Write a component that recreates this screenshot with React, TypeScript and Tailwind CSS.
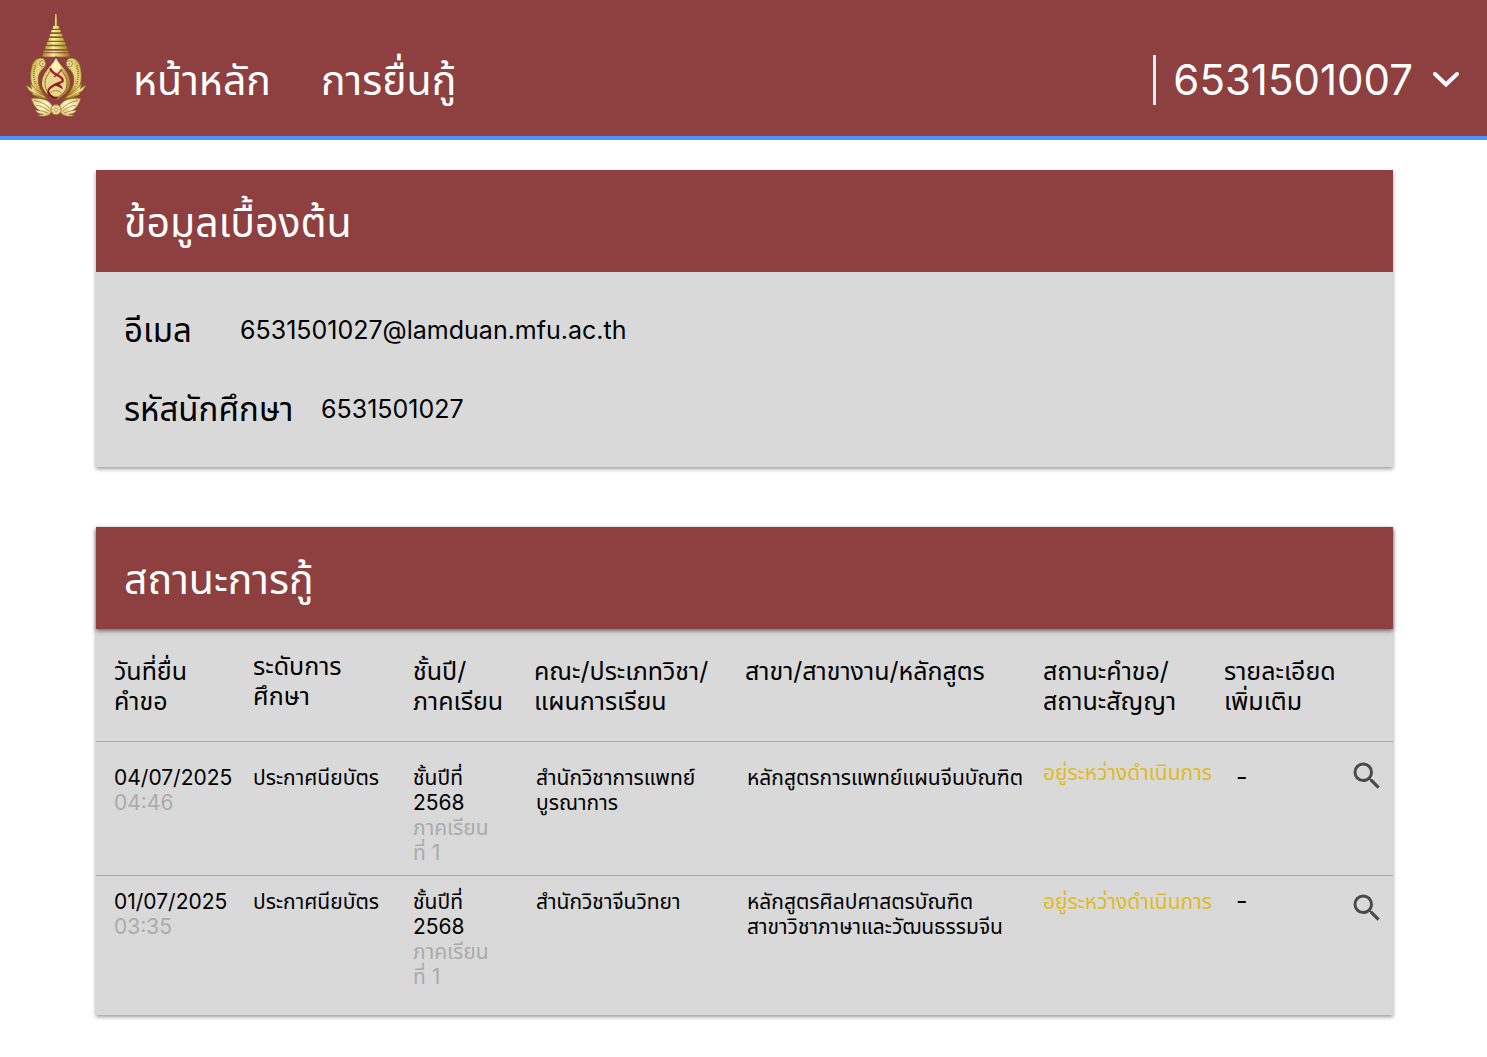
import { ReactNode } from "react";
import { MdSearch } from "react-icons/md";

const columns = [
  { width: "w-[139px]", pad: "pt-[27px]", lines: ["วันที่ยื่น", "คำขอ"] },
  { width: "w-[160px]", pad: "pt-[22px]", lines: ["ระดับการ", "ศึกษา"] },
  { width: "w-[121px]", pad: "pt-[27px]", lines: ["ชั้นปี/", "ภาคเรียน"] },
  { width: "w-[211px]", pad: "pt-[27px]", lines: ["คณะ/ประเภทวิชา/", "แผนการเรียน"] },
  { width: "w-[298px]", pad: "pt-[27px]", lines: ["สาขา/สาขางาน/หลักสูตร"] },
  { width: "w-[181px]", pad: "pt-[27px]", lines: ["สถานะคำขอ/", "สถานะสัญญา"] },
  { width: "w-[129px]", pad: "pt-[27px]", lines: ["รายละเอียด", "เพิ่มเติม"] },
];

const requests = [
  {
    date: "04/07/2025",
    time: "04:46",
    faculty: ["สำนักวิชาการแพทย์", "บูรณาการ"],
    program: ["หลักสูตรการแพทย์แผนจีนบัณฑิต"],
    row: "h-[134px] border-b border-[#a9a9a9]",
    cell: "pt-[23px]",
    status: "pt-[18px]",
    icon: "pt-4",
  },
  {
    date: "01/07/2025",
    time: "03:35",
    faculty: ["สำนักวิชาจีนวิทยา"],
    program: ["หลักสูตรศิลปศาสตรบัณฑิต", "สาขาวิชาภาษาและวัฒนธรรมจีน"],
    row: "h-[140px]",
    cell: "pt-[13px]",
    status: "pt-[13px]",
    icon: "pt-[14px]",
  },
];

function Lines({ items }: { items: string[] }) {
  return (
    <>
      {items.map((item) => (
        <span key={item} className="block">
          {item}
        </span>
      ))}
    </>
  );
}

function Emblem() {
  const side = (
    <>
      <path d="M84 164C70 158 54 168 49 188C44 210 44 232 54 252C64 270 82 280 100 286C82 268 70 250 69 230C68 210 76 200 88 190C94 180 92 168 84 164Z" fill="url(#gold)" stroke="#7d5f1c" strokeWidth="2" />
      <path d="M60 184C54 204 54 226 61 242" fill="none" stroke="#8d7432" strokeWidth="5" strokeDasharray="3 3" />
      <path d="M31 243C39 248 45 248 49 256C48 249 45 243 45 236C52 250 62 256 72 264C82 272 92 278 98 286C82 284 60 278 50 270C54 268 54 266 48 264C40 260 36 252 31 243Z" fill="url(#gold)" stroke="#7d5f1c" strokeWidth="1.5" />
      <path d="M42 252C54 264 70 270 88 280" fill="none" stroke="#fff2b4" strokeWidth="2" />
      <circle cx="82" cy="179" r="9" fill="#f2e4a4" stroke="#8d6d24" strokeWidth="2.5" />
      <circle cx="82" cy="179" r="3" fill="#b3923d" />
      <path d="M48 284C68 280 100 284 111 306C112 318 108 330 98 334C86 338 76 338 67 333C74 333 80 332 84 330C74 331 64 326 60 318C66 320 70 320 74 319C62 314 54 302 48 284Z" fill="url(#wing)" stroke="#8d6d24" strokeWidth="1.5" />
      <path d="M56 290C76 292 94 302 106 316M62 304C78 305 90 312 102 322M70 320C82 320 90 324 98 328" fill="none" stroke="#a18235" strokeWidth="2.5" />
    </>
  );
  return (
    <svg viewBox="29 30 186 312" className="h-[104px] w-[62px]" role="img" aria-label="ตรามหาวิทยาลัย">
      <defs>
        <linearGradient id="gold" x1="0" x2="1" y1="0" y2="1">
          <stop offset="0" stopColor="#b8942f" />
          <stop offset=".35" stopColor="#eddb86" />
          <stop offset=".65" stopColor="#bd9b38" />
          <stop offset="1" stopColor="#94701f" />
        </linearGradient>
        <linearGradient id="wing" x1="0" x2="1" y1="0" y2="1">
          <stop offset="0" stopColor="#dcc675" />
          <stop offset=".5" stopColor="#fff7cb" />
          <stop offset="1" stopColor="#cfb25a" />
        </linearGradient>
        <linearGradient id="spire">
          <stop offset="0" stopColor="#a88428" />
          <stop offset=".4" stopColor="#fbefa5" />
          <stop offset=".65" stopColor="#d8bd58" />
          <stop offset="1" stopColor="#937019" />
        </linearGradient>
      </defs>
      <path d="M120 64H124L132 80L142 102L152 122L158 144H86L91 122L101 102L112 80Z" fill="#83611c" />
      <g fill="url(#spire)">
        <path d="M120 30H124L126 66H118Z" />
        <path d="M114 66H130L132 74H112Z M109 78H135L137 85H107Z M105 90H139L142 97H102Z M101 102H144L146 110H99Z M96 114H149L151 122H94Z M91 127H154L156 135H89Z M85 140H159L161 145H83Z M82 148H163V158H82Z" />
      </g>
      {side}
      <g transform="matrix(-1 0 0 1 244 0)">{side}</g>
      <path d="M122 158C132 182 166 202 166 236C166 264 144 278 122 290C100 278 78 264 78 236C78 202 112 182 122 158Z" fill="url(#gold)" stroke="#8e4040" strokeWidth="4" />
      <path d="M122 176C130 194 155 212 155 238C155 262 140 272 122 283C104 272 89 262 89 238C89 212 114 194 122 176Z" fill="#e8d78e" stroke="#9c7029" strokeWidth="3" />
      <path d="M122 162C126 176 136 184 140 194L122 204L104 194C108 184 118 176 122 162Z" fill="#fff3b8" />
      <path d="M139 196C134 208 126 212 116 219" fill="none" stroke="#a62a35" strokeWidth="4" />
      <path d="M105 193C108 208 124 211 134 218C144 225 146 232 134 236C120 241 106 246 99 258" fill="none" stroke="#a01d29" strokeWidth="7" />
      <path d="M125 238C136 242 142 248 142 256C134 250 126 246 116 244" fill="#8c1c27" />
      <path d="M99 254C90 268 100 278 122 286L129 278C119 280 110 276 104 269" fill="#761621" />
      <path d="M104 268C112 258 130 256 138 268" fill="none" stroke="#ad8437" strokeWidth="3" />
      <circle cx="122" cy="317" r="15" fill="#f3e6ad" stroke="#a38236" strokeWidth="3" />
      <path d="M122 303V331M108 317H136M112 307L132 327M132 307L112 327" stroke="#b5964a" strokeWidth="2" />
      <circle cx="122" cy="317" r="4" fill="#fff9d8" stroke="#a38236" strokeWidth="1.5" />
    </svg>
  );
}

function PanelTitle({ children }: { children: ReactNode }) {
  return (
    <h2 className="flex h-[102px] items-center bg-[#8e4040] px-7 pt-px text-[41px] leading-[50px] text-white">
      {children}
    </h2>
  );
}

export default function App() {
  return (
    <div className="min-h-screen bg-white font-['Inter','Noto_Sans_Thai','Noto_Sans',sans-serif] text-black">
      <header className="flex h-[140px] items-center justify-between border-b-4 border-[#4d94f7] bg-[#8e4040] pr-[27px] pl-[25px] text-white">
        <div className="flex items-center">
          <a href="#home" className="mb-1">
            <Emblem />
          </a>
          <nav className="ml-[46px] flex gap-[50px] pt-6 text-[41px] leading-[50px]">
            <a href="#home">หน้าหลัก</a>
            <a href="#loans">การยื่นกู้</a>
          </nav>
        </div>
        <button type="button" className="mt-6 flex items-center text-[42px] leading-[50px]">
          <span className="mr-[17px] h-[50px] w-[3px] bg-white/90" />
          6531501007
          <svg viewBox="0 0 28 18" className="ml-[19px] w-7" fill="none" stroke="currentColor" strokeWidth="4" strokeLinecap="round">
            <path d="M3 3L14 13.5L25 3" />
          </svg>
        </button>
      </header>

      <main className="mx-auto flex flex-col gap-[60px] pt-[30px] pr-[94px] pb-10 pl-24">
        <section className="bg-[#d9d9d9] shadow-[0_2px_4px_rgba(0,0,0,0.4)]">
          <PanelTitle>ข้อมูลเบื้องต้น</PanelTitle>
          <dl className="flex flex-col gap-[39px] px-7 pt-[38px] pb-[38px]">
            <div className="flex h-10 items-center">
              <dt className="w-[116px] text-[33px] leading-10">อีเมล</dt>
              <dd className="text-[25px] leading-10">6531501027@lamduan.mfu.ac.th</dd>
            </div>
            <div className="flex h-10 items-center">
              <dt className="w-[197px] text-[33px] leading-10">รหัสนักศึกษา</dt>
              <dd className="text-[25px] leading-10">6531501027</dd>
            </div>
          </dl>
        </section>

        <section className="bg-[#d9d9d9] shadow-[0_2px_4px_rgba(0,0,0,0.4)]">
          <div className="relative shadow-[0_2px_4px_rgba(0,0,0,0.5)]">
            <PanelTitle>สถานะการกู้</PanelTitle>
          </div>
          <table className="w-full table-fixed border-collapse text-left">
            <thead>
              <tr className="h-[112px] border-b border-[#a9a9a9] align-top text-[25px] leading-[30px]">
                {columns.map((column) => (
                  <th key={column.lines[0]} scope="col" className={`${column.width} ${column.pad} pl-[18px] font-normal whitespace-nowrap`}>
                    <Lines items={column.lines} />
                  </th>
                ))}
                <td />
              </tr>
            </thead>
            <tbody>
              {requests.map((request) => (
                <tr key={request.date} className={`${request.row} align-top text-[21px] leading-[25px] whitespace-nowrap`}>
                  <td className={`${request.cell} pl-[18px]`}>
                    {request.date}
                    <span className="block text-[#ababab]">{request.time}</span>
                  </td>
                  <td className={`${request.cell} pl-[18px]`}>ประกาศนียบัตร</td>
                  <td className={`${request.cell} pl-[18px]`}>
                    <Lines items={["ชั้นปีที่", "2568"]} />
                    <span className="block text-[#ababab]">
                      <Lines items={["ภาคเรียน", "ที่ 1"]} />
                    </span>
                  </td>
                  <td className={`${request.cell} pl-5`}>
                    <Lines items={request.faculty} />
                  </td>
                  <td className={`${request.cell} pl-5`}>
                    <Lines items={request.program} />
                  </td>
                  <td className={`${request.status} pl-[18px] text-[#e0bb25]`}>อยู่ระหว่างดำเนินการ</td>
                  <td className={`${request.cell} pl-[30px] text-[25px]`}>-</td>
                  <td className={`${request.icon} pl-[14px]`}>
                    <button type="button" aria-label="ดูรายละเอียด" className="block text-[#4a4a4a]">
                      <MdSearch className="size-9" />
                    </button>
                  </td>
                </tr>
              ))}
            </tbody>
          </table>
        </section>
      </main>
    </div>
  );
}
